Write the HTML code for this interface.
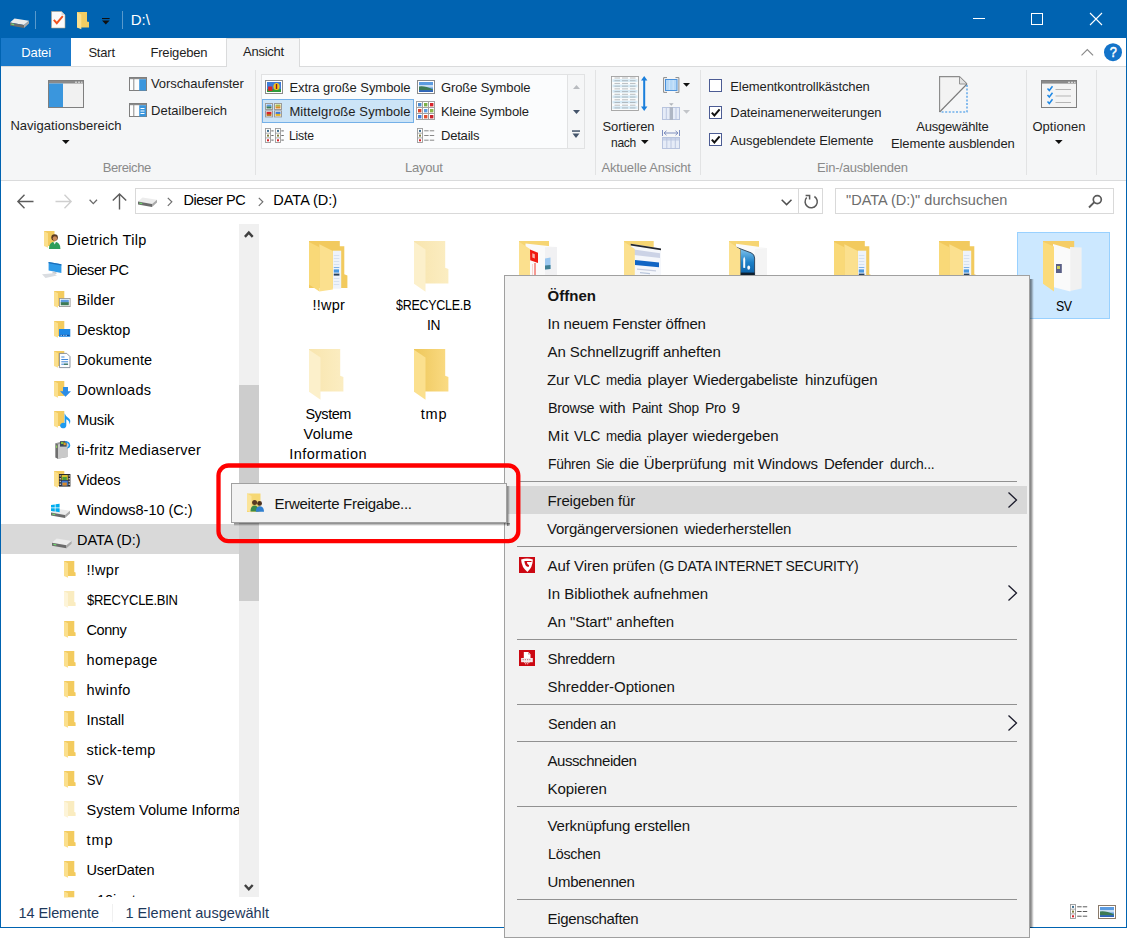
<!DOCTYPE html>
<html><head><meta charset="utf-8"><title>D:\</title>
<style>
html,body{margin:0;padding:0;background:#fff;}
body{width:1127px;height:940px;position:relative;overflow:hidden;font-family:"Liberation Sans",sans-serif;}
div,span.t,svg{position:absolute;}
span.t{white-space:nowrap;line-height:20px;}
svg{overflow:visible;}
</style></head><body>
<div style="left:0px;top:0px;width:1127px;height:928px;background:#0063B1;"></div>
<div style="left:1px;top:38px;width:1125px;height:889px;background:#fff;"></div>
<span class="t" style="left:130.70px;top:10.00px;font-size:15px;color:#fff;">D:\</span>
<div style="left:1px;top:38px;width:70px;height:28px;background:#1979CA;"></div>
<span class="t" style="left:21.30px;top:42.50px;font-size:13px;color:#fff;letter-spacing:-0.139px;">Datei</span>
<span class="t" style="left:88.40px;top:42.50px;font-size:13px;color:#1E1E1E;letter-spacing:-0.207px;">Start</span>
<span class="t" style="left:150.40px;top:42.50px;font-size:13px;color:#1E1E1E;letter-spacing:-0.171px;">Freigeben</span>
<div style="left:1px;top:66px;width:1125px;height:113px;background:#F5F6F7;border-top:1px solid #DADBDC;border-bottom:1px solid #DADBDC;box-sizing:content-box;"></div>
<div style="left:226px;top:38px;width:74px;height:29px;background:#F5F6F7;border:1px solid #DADBDC;border-bottom:none;box-sizing:border-box;"></div>
<span class="t" style="left:243.10px;top:42.30px;font-size:13px;color:#1E1E1E;letter-spacing:-0.273px;">Ansicht</span>
<div style="left:255px;top:70px;width:1px;height:105px;background:#E2E3E4;"></div>
<div style="left:595px;top:70px;width:1px;height:105px;background:#E2E3E4;"></div>
<div style="left:700px;top:70px;width:1px;height:105px;background:#E2E3E4;"></div>
<div style="left:1026px;top:70px;width:1px;height:105px;background:#E2E3E4;"></div>
<div style="left:1096px;top:70px;width:1px;height:105px;background:#E2E3E4;"></div>
<span class="t" style="left:102.75px;top:158.00px;font-size:13px;color:#8A8A8A;letter-spacing:-0.398px;">Bereiche</span>
<span class="t" style="left:405.00px;top:158.00px;font-size:13px;color:#8A8A8A;letter-spacing:-0.213px;">Layout</span>
<span class="t" style="left:601.45px;top:158.00px;font-size:13px;color:#8A8A8A;letter-spacing:-0.152px;">Aktuelle Ansicht</span>
<span class="t" style="left:817.00px;top:158.00px;font-size:13px;color:#8A8A8A;letter-spacing:-0.214px;">Ein-/ausblenden</span>
<span class="t" style="left:10.40px;top:115.90px;font-size:13px;color:#1E1E1E;letter-spacing:0.037px;">Navigationsbereich</span>
<span class="t" style="left:151.00px;top:74.30px;font-size:13px;color:#1E1E1E;letter-spacing:-0.080px;">Vorschaufenster</span>
<span class="t" style="left:151.00px;top:100.50px;font-size:13px;color:#1E1E1E;letter-spacing:0.012px;">Detailbereich</span>
<div style="left:261px;top:74px;width:324px;height:75px;background:#FBFCFD;border:1px solid #E1E2E3;box-sizing:border-box;"></div>
<div style="left:567px;top:75px;width:17px;height:73px;background:#F5F6F7;border-left:1px solid #E1E2E3;box-sizing:border-box;"></div>
<div style="left:262px;top:99px;width:152px;height:24px;background:#CCE4F7;border:1px solid #74B0E8;box-sizing:border-box;"></div>
<span class="t" style="left:289.40px;top:77.50px;font-size:13px;color:#1E1E1E;letter-spacing:-0.052px;">Extra große Symbole</span>
<span class="t" style="left:289.40px;top:101.50px;font-size:13px;color:#1E1E1E;letter-spacing:0.111px;">Mittelgroße Symbole</span>
<span class="t" style="left:289.40px;top:125.50px;font-size:13px;color:#1E1E1E;letter-spacing:-0.206px;transform:scaleX(0.9396);transform-origin:0 0;">Liste</span>
<span class="t" style="left:441.00px;top:77.50px;font-size:13px;color:#1E1E1E;letter-spacing:-0.130px;">Große Symbole</span>
<span class="t" style="left:441.00px;top:101.50px;font-size:13px;color:#1E1E1E;letter-spacing:-0.188px;">Kleine Symbole</span>
<span class="t" style="left:441.00px;top:125.50px;font-size:13px;color:#1E1E1E;letter-spacing:-0.203px;">Details</span>
<span class="t" style="left:602.40px;top:116.50px;font-size:13px;color:#1E1E1E;letter-spacing:-0.072px;">Sortieren</span>
<span class="t" style="left:610.70px;top:133.00px;font-size:13px;color:#1E1E1E;letter-spacing:-0.282px;transform:scaleX(0.9246);transform-origin:0 0;">nach</span>
<span class="t" style="left:730.30px;top:76.50px;font-size:13px;color:#1E1E1E;letter-spacing:-0.097px;">Elementkontrollkästchen</span>
<span class="t" style="left:730.30px;top:103.00px;font-size:13px;color:#1E1E1E;letter-spacing:-0.054px;">Dateinamenerweiterungen</span>
<span class="t" style="left:730.30px;top:130.50px;font-size:13px;color:#1E1E1E;letter-spacing:-0.104px;">Ausgeblendete Elemente</span>
<span class="t" style="left:916.30px;top:116.50px;font-size:13px;color:#1E1E1E;letter-spacing:-0.212px;">Ausgewählte</span>
<span class="t" style="left:891.00px;top:133.50px;font-size:13px;color:#1E1E1E;letter-spacing:-0.110px;">Elemente ausblenden</span>
<span class="t" style="left:1032.40px;top:116.50px;font-size:13px;color:#1E1E1E;letter-spacing:0.046px;">Optionen</span>
<div style="left:135px;top:188px;width:688px;height:26px;background:#fff;border:1px solid #D9D9D9;box-sizing:border-box;"></div>
<div style="left:798px;top:189px;width:1px;height:24px;background:#D9D9D9;"></div>
<div style="left:835px;top:188px;width:279px;height:26px;background:#fff;border:1px solid #D9D9D9;box-sizing:border-box;"></div>
<span class="t" style="left:183.50px;top:190.00px;font-size:14.5px;color:#000;letter-spacing:-0.493px;">Dieser PC</span>
<span class="t" style="left:273.30px;top:190.00px;font-size:14.5px;color:#000;">DATA (D:)</span>
<span class="t" style="left:846.00px;top:190.00px;font-size:14.5px;color:#6D6D6D;letter-spacing:0.007px;">&quot;DATA (D:)&quot; durchsuchen</span>
<div style="left:1px;top:524px;width:238px;height:30px;background:#D9D9D9;"></div>
<div style="left:239px;top:224px;width:20px;height:673px;background:#F0F0F0;"></div>
<div style="left:239px;top:385px;width:20px;height:216px;background:#CDCDCD;"></div>
<div style="left:0;top:0;width:238.6px;height:898px;overflow:hidden;">
<span class="t" style="left:66.80px;top:230.00px;font-size:14.5px;color:#000;letter-spacing:0.311px;">Dietrich Tilp</span>
<span class="t" style="left:66.80px;top:260.00px;font-size:14.5px;color:#000;letter-spacing:-0.481px;">Dieser PC</span>
<span class="t" style="left:77.00px;top:290.00px;font-size:14.5px;color:#000;letter-spacing:0.170px;">Bilder</span>
<span class="t" style="left:77.00px;top:320.00px;font-size:14.5px;color:#000;">Desktop</span>
<span class="t" style="left:77.00px;top:350.00px;font-size:14.5px;color:#000;letter-spacing:0.129px;">Dokumente</span>
<span class="t" style="left:77.00px;top:380.00px;font-size:14.5px;color:#000;letter-spacing:0.287px;">Downloads</span>
<span class="t" style="left:77.00px;top:410.00px;font-size:14.5px;color:#000;letter-spacing:-0.154px;">Musik</span>
<span class="t" style="left:77.00px;top:440.00px;font-size:14.5px;color:#000;letter-spacing:0.244px;">ti-fritz Mediaserver</span>
<span class="t" style="left:77.00px;top:470.00px;font-size:14.5px;color:#000;letter-spacing:-0.136px;">Videos</span>
<span class="t" style="left:77.00px;top:500.00px;font-size:14.5px;color:#000;letter-spacing:-0.033px;">Windows8-10 (C:)</span>
<span class="t" style="left:77.00px;top:530.00px;font-size:14.5px;color:#000;letter-spacing:-0.047px;">DATA (D:)</span>
<span class="t" style="left:86.50px;top:560.00px;font-size:14.5px;color:#000;letter-spacing:0.277px;">!!wpr</span>
<span class="t" style="left:86.50px;top:590.00px;font-size:14.5px;color:#000;letter-spacing:-0.286px;transform:scaleX(0.8955);transform-origin:0 0;">$RECYCLE.BIN</span>
<span class="t" style="left:86.50px;top:620.00px;font-size:14.5px;color:#000;letter-spacing:-0.426px;">Conny</span>
<span class="t" style="left:86.50px;top:650.00px;font-size:14.5px;color:#000;letter-spacing:0.341px;">homepage</span>
<span class="t" style="left:86.50px;top:680.00px;font-size:14.5px;color:#000;letter-spacing:0.399px;">hwinfo</span>
<span class="t" style="left:86.50px;top:710.00px;font-size:14.5px;color:#000;letter-spacing:-0.024px;">Install</span>
<span class="t" style="left:86.50px;top:740.00px;font-size:14.5px;color:#000;letter-spacing:0.317px;">stick-temp</span>
<span class="t" style="left:86.50px;top:770.00px;font-size:14.5px;color:#000;letter-spacing:-0.581px;transform:scaleX(0.8734);transform-origin:0 0;">SV</span>
<span class="t" style="left:86.50px;top:800.00px;font-size:14.5px;color:#000;letter-spacing:0.025px;">System Volume Informa</span>
<span class="t" style="left:86.50px;top:830.00px;font-size:14.5px;color:#000;letter-spacing:0.979px;">tmp</span>
<span class="t" style="left:86.50px;top:860.00px;font-size:14.5px;color:#000;letter-spacing:-0.151px;">UserDaten</span>
</div>
<div style="left:1px;top:880px;width:238px;height:17px;overflow:hidden;"><span class="t" style="left:85.5px;top:10px;font-size:14.5px;">w10inst</span></div>
<span class="t" style="left:18.60px;top:903.00px;font-size:14.5px;color:#1E395B;letter-spacing:-0.102px;">14 Elemente</span>
<span class="t" style="left:125.40px;top:903.00px;font-size:14.5px;color:#1E395B;letter-spacing:0.048px;">1 Element ausgewählt</span>
<div style="left:112px;top:904px;width:1px;height:18px;background:#F0F0F0;"></div>
<span class="t" style="left:312.40px;top:295.00px;font-size:14.5px;color:#000;letter-spacing:0.252px;">!!wpr</span>
<span class="t" style="left:395.90px;top:295.00px;font-size:14.5px;color:#000;letter-spacing:-0.301px;transform:scaleX(0.8612);transform-origin:0 0;">$RECYCLE.B</span>
<span class="t" style="left:426.60px;top:315.00px;font-size:14.5px;color:#000;letter-spacing:-0.435px;transform:scaleX(0.9527);transform-origin:0 0;">IN</span>
<span class="t" style="left:305.40px;top:403.80px;font-size:14.5px;color:#000;letter-spacing:-0.472px;">System</span>
<span class="t" style="left:303.60px;top:423.50px;font-size:14.5px;color:#000;letter-spacing:0.169px;">Volume</span>
<span class="t" style="left:289.20px;top:443.80px;font-size:14.5px;color:#000;letter-spacing:0.483px;">Information</span>
<span class="t" style="left:420.70px;top:403.80px;font-size:14.5px;color:#000;letter-spacing:0.829px;">tmp</span>
<div style="left:1017px;top:232px;width:93px;height:87px;background:#CCE8FF;border:1px solid #99D1FF;box-sizing:border-box;"></div>
<span class="t" style="left:1055.70px;top:295.50px;font-size:14.5px;color:#000;letter-spacing:-0.581px;transform:scaleX(0.8521);transform-origin:0 0;">SV</span>
<svg width="0" height="0" style="left:0;top:0"><defs><linearGradient id="gb" x1="0" y1="0" x2="1" y2="0"><stop offset="0" stop-color="#EEC75A"/><stop offset="1" stop-color="#FADB84"/></linearGradient><linearGradient id="gbp" x1="0" y1="0" x2="1" y2="0"><stop offset="0" stop-color="#F8E5AE"/><stop offset="1" stop-color="#FBEDC2"/></linearGradient><linearGradient id="gth" x1="0" y1="0" x2="1" y2="0"><stop offset="0" stop-color="#5F8FD0"/><stop offset="1" stop-color="#BFD7F3"/></linearGradient></defs></svg>
<svg style="left:308.6px;top:241.3px;" width="39" height="52" viewBox="0 0 39 52"><path d="M0 0H30.8V5.2H35.3V33.2L38.4 34.6V47H0Z" fill="#F2CA5E"/><rect x="23.9" y="9.7" width="8.3" height="38" fill="#EEF3FA"/><g stroke-width="1"><path d="M24.8 14.5h5.5M24.8 17.5h5.5M24.8 20.5h5.5M24.8 23.5h5.5M24.8 37.5h5.5M24.8 40.5h5.5M24.8 43.5h5.5" stroke="#D5E1F0"/><path d="M24.8 26.5h5.5" stroke="#7FB2E8"/></g><rect x="24.8" y="28.4" width="5.2" height="3.2" fill="#4A98E0"/><rect x="24.8" y="32.6" width="5.6" height="2" fill="#28425C"/><path d="M10.4 3.2L23.9 10V48.6L10.4 50.6Z" fill="#FBE08E"/><path d="M0 0.9L10.4 6.3V50.6L0 43.4Z" fill="#F9D978"/></svg>
<svg style="left:413.7px;top:241.3px;" width="39" height="52" viewBox="0 0 39 52"><path d="M0 0H31.2V26.7L34.4 28V42.6H0Z" fill="url(#gbp)"/><path d="M0 0.7L11.5 8.4V50.7L0 42.7Z" fill="#FCF0CB"/></svg>
<svg style="left:518.6px;top:241.3px;" width="40" height="52" viewBox="0 0 40 52"><path d="M0 0H30V47H0Z" fill="#F6D573"/><path d="M6.5 2.5L38 6V50H27V47L6.5 40Z" fill="#FAFAFA"/><path d="M26 6.3L38 6V50H26Z" fill="#F1F1F3"/><path d="M11 8.6L19 11.8V22L11.2 19.2Z" fill="#F01A10"/><path d="M13.3 12.2L15.8 13.2V17.6L13.3 16.6Z" fill="#F7B8B0"/><path d="M26 17.5L31.5 16.5V28L26 28.6Z" fill="#9CC8F0"/><path d="M26 24.5L31.5 24V28L26 28.6Z" fill="#3F7F94"/><path d="M16 22V36" stroke="#F0392B" stroke-width="1"/><path d="M13.5 23V36" stroke="#F6C8C4" stroke-width="0.8"/><path d="M0 0.7L11 8V50L0 42.7Z" fill="#FBE08E"/></svg>
<svg style="left:624.3px;top:241.3px;" width="40" height="52" viewBox="0 0 40 52"><path d="M0 0H29.7V47H0Z" fill="#F6D573"/><path d="M6.7 2.7L37 7.5V50L6.7 44Z" fill="#F5F7FB"/><path d="M6.7 2.7L37 7.5V9.3L6.7 4.5Z" fill="#23262E"/><path d="M10 8.5L36 12.2V17L10 14Z" fill="#CCD3E6"/><path d="M11 19L35 21.6V26.2L11 24Z" fill="#1165C4"/><path d="M13 27.5L32 29.3V30.6L13 28.8Z" fill="#C9CFE0"/><path d="M16 31L26 32V33.2L16 32.2Z" fill="#B9C6DC"/><path d="M0 0.7L10.8 8V50L0 42.7Z" fill="#FBE08E"/></svg>
<svg style="left:728.8px;top:241.3px;" width="40" height="52" viewBox="0 0 40 52"><defs><linearGradient id="g5" x1="0" y1="0" x2="0" y2="1"><stop offset="0" stop-color="#8ACBF2"/><stop offset="0.55" stop-color="#1C7FC6"/><stop offset="1" stop-color="#0B5FA5"/></linearGradient></defs><path d="M0 0H30V47H0Z" fill="#F6D573"/><path d="M7 2.7L38 7V50L7 44Z" fill="#FAFAFA"/><path d="M26 8L38 7V50H26Z" fill="#F4F4F4"/><path d="M7.4 6.3L22 11.8Q25.6 13.2 25.6 17V34H11.4V8.6Z" fill="url(#g5)" stroke="#2A3D52" stroke-width="0.9"/><path d="M14.2 26.8V18L15.2 15.6L16.2 18V27Z" fill="#F4F9FD"/><ellipse cx="19.7" cy="26.6" rx="1.4" ry="2.2" fill="#F4F9FD"/><rect x="11.4" y="31.6" width="14.2" height="3" fill="#10202E"/><path d="M0 0.7L11.4 8.4V50L0 42.7Z" fill="#FBE08E"/></svg>
<svg style="left:833.8px;top:241.3px;" width="39" height="52" viewBox="0 0 39 52"><path d="M0 0H30.8V5.2H35.3V33.2L38.4 34.6V47H0Z" fill="#F2CA5E"/><rect x="23.9" y="9.7" width="8.3" height="38" fill="#EEF3FA"/><g stroke-width="1"><path d="M24.8 14.5h5.5M24.8 17.5h5.5M24.8 20.5h5.5M24.8 23.5h5.5M24.8 37.5h5.5M24.8 40.5h5.5M24.8 43.5h5.5" stroke="#D5E1F0"/><path d="M24.8 26.5h5.5" stroke="#7FB2E8"/></g><rect x="24.8" y="28.4" width="5.2" height="3.2" fill="#4A98E0"/><rect x="24.8" y="32.6" width="5.6" height="2" fill="#28425C"/><path d="M10.4 3.2L23.9 10V48.6L10.4 50.6Z" fill="#FBE08E"/><path d="M0 0.9L10.4 6.3V50.6L0 43.4Z" fill="#F9D978"/></svg>
<svg style="left:938.7px;top:241.3px;" width="39" height="52" viewBox="0 0 39 52"><path d="M0 0H30.8V5.2H35.3V33.2L38.4 34.6V47H0Z" fill="#F2CA5E"/><rect x="23.9" y="9.7" width="8.3" height="38" fill="#EEF3FA"/><g stroke-width="1"><path d="M24.8 14.5h5.5M24.8 17.5h5.5M24.8 20.5h5.5M24.8 23.5h5.5M24.8 37.5h5.5M24.8 40.5h5.5M24.8 43.5h5.5" stroke="#D5E1F0"/><path d="M24.8 26.5h5.5" stroke="#7FB2E8"/></g><rect x="24.8" y="28.4" width="5.2" height="3.2" fill="#4A98E0"/><rect x="24.8" y="32.6" width="5.6" height="2" fill="#28425C"/><path d="M10.4 3.2L23.9 10V48.6L10.4 50.6Z" fill="#FBE08E"/><path d="M0 0.9L10.4 6.3V50.6L0 43.4Z" fill="#F9D978"/></svg>
<svg style="left:308.7px;top:349.3px;" width="39" height="52" viewBox="0 0 39 52"><path d="M0 0H31.2V26.7L34.4 28V42.6H0Z" fill="url(#gbp)"/><path d="M0 0.7L11.5 8.4V50.7L0 42.7Z" fill="#FCF0CB"/></svg>
<svg style="left:413.7px;top:349.3px;" width="39" height="52" viewBox="0 0 39 52"><path d="M0 0H31.2V26.7L34.4 28V42.6H0Z" fill="url(#gb)"/><path d="M0 0.7L11.5 8.4V50.7L0 42.7Z" fill="#FBE08E"/></svg>
<svg style="left:1043.2px;top:241px;" width="40" height="52" viewBox="0 0 40 52"><path d="M0 0H31.2V8H0Z" fill="#F5CD66"/><path d="M27 6L38.6 6.5V47.5L27 50Z" fill="#F1F1F1"/><path d="M10 3L27.4 8V50.5L10 46Z" fill="#FAFAFA"/><rect x="13" y="23" width="5.8" height="9" fill="#5A5F86"/><rect x="14" y="25" width="3" height="3" fill="#C9CC5A"/><path d="M0 0.7L11 5.5V50.5L0 42.7Z" fill="#FBDB7A"/></svg>
<svg style="left:64px;top:560.7px;" width="12" height="17" viewBox="0 0 12 17"><path d="M0 0H10.3V11L11.6 11.4V15H0Z" fill="#F3CB5E"/><path d="M0 0.2L4 2.3V16.8L0 15Z" fill="#FBDF8C"/></svg>
<svg style="left:64px;top:590.7px;" width="12" height="17" viewBox="0 0 12 17"><path d="M0 0H10.3V11L11.6 11.4V15H0Z" fill="#FAECC0"/><path d="M0 0.2L4 2.3V16.8L0 15Z" fill="#FDF4D8"/></svg>
<svg style="left:64px;top:620.7px;" width="12" height="17" viewBox="0 0 12 17"><path d="M0 0H10.3V11L11.6 11.4V15H0Z" fill="#F3CB5E"/><path d="M0 0.2L4 2.3V16.8L0 15Z" fill="#FBDF8C"/></svg>
<svg style="left:64px;top:650.7px;" width="12" height="17" viewBox="0 0 12 17"><path d="M0 0H10.3V11L11.6 11.4V15H0Z" fill="#F3CB5E"/><path d="M0 0.2L4 2.3V16.8L0 15Z" fill="#FBDF8C"/></svg>
<svg style="left:64px;top:680.7px;" width="12" height="17" viewBox="0 0 12 17"><path d="M0 0H10.3V11L11.6 11.4V15H0Z" fill="#F3CB5E"/><path d="M0 0.2L4 2.3V16.8L0 15Z" fill="#FBDF8C"/></svg>
<svg style="left:64px;top:710.7px;" width="12" height="17" viewBox="0 0 12 17"><path d="M0 0H10.3V11L11.6 11.4V15H0Z" fill="#F3CB5E"/><path d="M0 0.2L4 2.3V16.8L0 15Z" fill="#FBDF8C"/></svg>
<svg style="left:64px;top:740.7px;" width="12" height="17" viewBox="0 0 12 17"><path d="M0 0H10.3V11L11.6 11.4V15H0Z" fill="#F3CB5E"/><path d="M0 0.2L4 2.3V16.8L0 15Z" fill="#FBDF8C"/></svg>
<svg style="left:64px;top:770.7px;" width="12" height="17" viewBox="0 0 12 17"><path d="M0 0H10.3V11L11.6 11.4V15H0Z" fill="#F3CB5E"/><path d="M0 0.2L4 2.3V16.8L0 15Z" fill="#FBDF8C"/></svg>
<svg style="left:64px;top:800.7px;" width="12" height="17" viewBox="0 0 12 17"><path d="M0 0H10.3V11L11.6 11.4V15H0Z" fill="#FAECC0"/><path d="M0 0.2L4 2.3V16.8L0 15Z" fill="#FDF4D8"/></svg>
<svg style="left:64px;top:830.7px;" width="12" height="17" viewBox="0 0 12 17"><path d="M0 0H10.3V11L11.6 11.4V15H0Z" fill="#F3CB5E"/><path d="M0 0.2L4 2.3V16.8L0 15Z" fill="#FBDF8C"/></svg>
<svg style="left:64px;top:860.7px;" width="12" height="17" viewBox="0 0 12 17"><path d="M0 0H10.3V11L11.6 11.4V15H0Z" fill="#F3CB5E"/><path d="M0 0.2L4 2.3V16.8L0 15Z" fill="#FBDF8C"/></svg>
<svg style="left:64px;top:890.7px;" width="12" height="6.3" viewBox="0 0 12 6.3"><path d="M0 0H10.3V6.3H0Z" fill="#F3CB5E"/><path d="M0 0.2L4 2.3V6.3H0Z" fill="#FBDF8C"/></svg>
<svg style="left:9.7px;top:18.3px;" width="19.0" height="10.0" viewBox="0 0 19 10"><path d="M0 4.5L4.5 0.6L19 2.8L14 7Z" fill="#ECECEC"/><path d="M0 4.5L14 7V10L0 7.5Z" fill="#6B6B6B"/><path d="M14 7L19 2.8V5.6L14 10Z" fill="#A9A9A9"/><path d="M1.3 5.6L4.2 6.1V7.2L1.3 6.7Z" fill="#6FD66F"/></svg>
<div style="left:35px;top:11px;width:1px;height:18px;background:rgba(255,255,255,.35);"></div>
<div style="left:122px;top:11px;width:1px;height:18px;background:rgba(255,255,255,.35);"></div>
<svg style="left:51px;top:11.3px;" width="15" height="18" viewBox="0 0 15 18"><path d="M0.5 0.5H10.5L14 4V17H0.5Z" fill="#FBFBFB" stroke="#B9A58C" stroke-width="0.6"/><path d="M10.5 0.5V4H14Z" fill="#D9D9D9"/><path d="M2.8 8.8L5.8 12.2L11.8 5.2" fill="none" stroke="#F0501E" stroke-width="1.9"/></svg>
<svg style="left:76.7px;top:12px;" width="13" height="18" viewBox="0 0 13 18"><path d="M0 0H10V9.5L12 10V15.5H0Z" fill="#F2CC62"/><path d="M0 0.3L4.3 2.6V17.3L0 15.5Z" fill="#FBE08E"/></svg>
<svg style="left:102px;top:18px;" width="8" height="7" viewBox="0 0 8 7"><rect x="0" y="0" width="7.6" height="1.1" fill="#101010"/><path d="M0 2.4H7.6L3.8 6.6Z" fill="#101010"/></svg>
<svg style="left:973px;top:18px;" width="12" height="1" viewBox="0 0 12 1"><rect width="12" height="1" fill="#fff"/></svg>
<svg style="left:1031px;top:13px;" width="12" height="12" viewBox="0 0 12 12"><rect x="0.5" y="0.5" width="11" height="11" fill="none" stroke="#fff" stroke-width="1"/></svg>
<svg style="left:1090px;top:13px;" width="12" height="12" viewBox="0 0 12 12"><path d="M0 0L12 12M12 0L0 12" stroke="#fff" stroke-width="1.1" fill="none"/></svg>
<svg style="left:1081px;top:49px;" width="13" height="7" viewBox="0 0 13 7"><path d="M0.5 6.3L6.3 0.6L12.1 6.3" fill="none" stroke="#8A8A8A" stroke-width="1.15"/></svg>
<svg style="left:1104px;top:43px;" width="18" height="18" viewBox="0 0 18 18"><circle cx="9" cy="9.2" r="9" fill="#1373C9"/></svg>
<span class="t" style="left:1108.84px;top:42.10px;font-size:15px;color:#fff;-webkit-text-stroke:0.5px #fff;transform:scaleX(0.85);transform-origin:50% 50%;">?</span>
<svg style="left:17px;top:194px;" width="17" height="15" viewBox="0 0 17 15"><path d="M7.5 0.8L0.9 7.5L7.5 14.2M1 7.5H16.5" fill="none" stroke="#5C5C5C" stroke-width="1.4"/></svg>
<svg style="left:55px;top:194px;" width="17" height="15" viewBox="0 0 17 15"><path d="M9.5 0.8L16.1 7.5L9.5 14.2M16 7.5H0.5" fill="none" stroke="#CFCFCF" stroke-width="1.4"/></svg>
<svg style="left:89px;top:199px;" width="9" height="6" viewBox="0 0 9 6"><path d="M0.6 0.8L4.3 4.6L8 0.8" fill="none" stroke="#6A6A6A" stroke-width="1.3"/></svg>
<svg style="left:112px;top:193px;" width="15" height="17" viewBox="0 0 15 17"><path d="M0.8 7.5L7.5 0.9L14.2 7.5M7.5 1V16.5" fill="none" stroke="#5C5C5C" stroke-width="1.4"/></svg>
<svg style="left:138.4px;top:196.5px;" width="19.0" height="10.0" viewBox="0 0 19 10"><path d="M0 4.5L4.5 0.6L19 2.8L14 7Z" fill="#ECECEC"/><path d="M0 4.5L14 7V10L0 7.5Z" fill="#6B6B6B"/><path d="M14 7L19 2.8V5.6L14 10Z" fill="#A9A9A9"/><path d="M1.3 5.6L4.2 6.1V7.2L1.3 6.7Z" fill="#6FD66F"/></svg>
<svg style="left:167px;top:196.5px;" width="6" height="10" viewBox="0 0 6 10"><path d="M0.8 0.8L4.8 4.8L0.8 8.8" fill="none" stroke="#6E6E6E" stroke-width="1.2"/></svg>
<svg style="left:258px;top:196.5px;" width="6" height="10" viewBox="0 0 6 10"><path d="M0.8 0.8L4.8 4.8L0.8 8.8" fill="none" stroke="#6E6E6E" stroke-width="1.2"/></svg>
<svg style="left:781.2px;top:199.3px;" width="11.2" height="7" viewBox="0 0 11.2 7"><path d="M0.7 0.8L5.6 5.6L10.5 0.8" fill="none" stroke="#505050" stroke-width="1.5"/></svg>
<svg style="left:803px;top:194px;" width="16" height="16" viewBox="0 0 16 16"><path d="M11.4 2.5A6.1 6.1 0 1 1 3.7 3.55" fill="none" stroke="#5A5A5A" stroke-width="1.5"/><path d="M2.6 1.5H6.6V5.5" fill="none" stroke="#5A5A5A" stroke-width="1.5"/></svg>
<svg style="left:1088px;top:194px;" width="15" height="15" viewBox="0 0 15 15"><circle cx="9.3" cy="5.6" r="4" fill="none" stroke="#5A5A5A" stroke-width="1.7"/><path d="M6.3 8.2L1 13.5" stroke="#5A5A5A" stroke-width="1.9"/></svg>
<svg style="left:243.7px;top:230px;" width="9.6" height="9" viewBox="0 0 9.6 9"><path d="M0.9 6.9L4.8 2.6L8.7 6.9" fill="none" stroke="#404040" stroke-width="2.4"/></svg>
<svg style="left:243.7px;top:883px;" width="9.6" height="9" viewBox="0 0 9.6 9"><path d="M0.9 2L4.8 6.3L8.7 2" fill="none" stroke="#404040" stroke-width="2.4"/></svg>
<svg style="left:48px;top:80px;" width="36" height="28" viewBox="0 0 36 28"><rect x="0.5" y="0.5" width="35" height="27" fill="#F1F1F1" stroke="#7F7F7F"/><rect x="1" y="1" width="34" height="2.5" fill="#8A8A8A"/><rect x="1" y="3.5" width="14" height="23.5" fill="#3A96DD"/><path d="M27 2.2h2M30 2.2h2M33 2.2h1.5" stroke="#E8E8E8" stroke-width="1"/></svg>
<svg style="left:44.5px;top:139.5px;left:61.5px;" width="8" height="4" viewBox="0 0 8 4"><path d="M0 0H7.6L3.8 4Z" fill="#101010"/></svg>
<svg style="left:129px;top:77px;" width="18" height="14" viewBox="0 0 18 14"><rect x="0.5" y="0.5" width="17" height="13" fill="#FDFDFD" stroke="#7F7F7F"/><rect x="1" y="1" width="16" height="1.2" fill="#8A8A8A"/><rect x="4.3" y="2" width="1" height="11.5" fill="#8A8A8A"/><rect x="10.2" y="2.2" width="6.8" height="11.3" fill="#3A96DD"/></svg>
<svg style="left:129px;top:103px;" width="18" height="14" viewBox="0 0 18 14"><rect x="0.5" y="0.5" width="17" height="13" fill="#FDFDFD" stroke="#7F7F7F"/><rect x="1" y="1" width="16" height="1.2" fill="#8A8A8A"/><rect x="4.3" y="2" width="1" height="11.5" fill="#8A8A8A"/><rect x="10.2" y="2.2" width="6.8" height="11.3" fill="#3A96DD"/><path d="M11.5 5.5h4M11.5 8h4M11.5 10.5h4" stroke="#fff" stroke-width="1"/></svg>
<svg style="left:265px;top:80px;" width="18" height="14" viewBox="0 0 18 14"><rect x="0.5" y="0.5" width="17" height="13" fill="#fff" stroke="#8A8A8A"/><rect x="2" y="2" width="14" height="10" fill="#3E7BD8"/><rect x="2" y="9.2" width="14" height="2.8000000000000003" fill="#2F9A3A"/><rect x="3.12" y="6.5" width="4.2" height="4.5" fill="#D8232A"/><ellipse cx="11.520000000000001" cy="6.5" rx="3.08" ry="3.5999999999999996" fill="#F5C518"/><rect x="10.82" y="4.0" width="1.4000000000000001" height="5.0" fill="#8B1A1A"/></svg>
<svg style="left:417px;top:80px;" width="18" height="14" viewBox="0 0 18 14"><rect x="0.5" y="0.5" width="17" height="13" fill="#fff" stroke="#8A8A8A"/><rect x="2" y="2" width="14" height="10" fill="#5B9BE0"/><rect x="2" y="5.0" width="14" height="2.5" fill="#C7DDF2"/><path d="M2 6.5Q7.6000000000000005 5.5 16 9.5V10.5H2Z" fill="#3D7A55"/><rect x="2" y="10.2" width="14" height="1.7999999999999998" fill="#2E63B8"/></svg>
<svg style="left:265px;top:103px;" width="18" height="15" viewBox="0 0 18 15"><rect x="0.5" y="0.5" width="7" height="6" fill="#fff" stroke="#9A9A9A" stroke-width="1"/><rect x="1.5" y="1.5" width="5" height="2.20" fill="#5B9BE0"/><rect x="1.5" y="3.50" width="5" height="2.00" fill="#3D7A55"/><rect x="9.5" y="0.5" width="7" height="6" fill="#fff" stroke="#9A9A9A" stroke-width="1"/><rect x="10.5" y="1.5" width="5" height="2.20" fill="#A8B84A"/><rect x="10.5" y="3.50" width="5" height="2.00" fill="#D88A2A"/><rect x="0.5" y="7.9" width="7" height="6" fill="#fff" stroke="#9A9A9A" stroke-width="1"/><rect x="1.5" y="8.9" width="5" height="2.20" fill="#D8232A"/><rect x="1.5" y="10.90" width="5" height="2.00" fill="#B86A1A"/><rect x="9.5" y="7.9" width="7" height="6" fill="#fff" stroke="#9A9A9A" stroke-width="1"/><rect x="10.5" y="8.9" width="5" height="2.20" fill="#3E7BD8"/><rect x="10.5" y="10.90" width="5" height="2.00" fill="#E0B020"/></svg>
<svg style="left:416px;top:101px;" width="19" height="19" viewBox="0 0 19 19"><rect x="0.5" y="0.5" width="18" height="18" fill="#fff" stroke="#A2A2A2" stroke-width="1"/><path d="M6.5 1V18M12.5 1V18M1 6.5H18M1 12.5H18" stroke="#A2A2A2" stroke-width="1"/><rect x="2" y="2" width="3.4" height="3.4" fill="#4A8ACF"/><rect x="8" y="2" width="3.4" height="3.4" fill="#7AB04A"/><rect x="14" y="2" width="3.4" height="3.4" fill="#D8232A"/><rect x="2" y="8" width="3.4" height="3.4" fill="#D8432A"/><rect x="8" y="8" width="3.4" height="3.4" fill="#5B9BE0"/><rect x="14" y="8" width="3.4" height="3.4" fill="#8AB84A"/><rect x="2" y="14" width="3.4" height="3.4" fill="#3E7BD8"/><rect x="8" y="14" width="3.4" height="3.4" fill="#E05030"/><rect x="14" y="14" width="3.4" height="3.4" fill="#C8232A"/></svg>
<svg style="left:264.5px;top:128px;" width="19" height="15" viewBox="0 0 19 15"><rect x="0.5" y="0.5" width="5" height="14" fill="#fff" stroke="#9A9A9A" stroke-width="0.9"/><path d="M0.5 5.2h5M0.5 9.9h5" stroke="#9A9A9A" stroke-width="0.8"/><rect x="2" y="1.9" width="2" height="2" fill="#3F6F8F"/><rect x="2" y="6.6" width="2" height="2" fill="#7F7F3F"/><rect x="2" y="11.3" width="2" height="2" fill="#D8232A"/><rect x="10.5" y="0.5" width="5" height="14" fill="#fff" stroke="#9A9A9A" stroke-width="0.9"/><path d="M10.5 5.2h5M10.5 9.9h5" stroke="#9A9A9A" stroke-width="0.8"/><rect x="12" y="1.9" width="2" height="2" fill="#3F6F8F"/><rect x="12" y="6.6" width="2" height="2" fill="#7F7F3F"/><rect x="12" y="11.3" width="2" height="2" fill="#D8232A"/><path d="M6.3 2.9h2.3M6.3 7.5h2.3M6.3 12.1h2.3M16.3 2.9h2.5M16.3 7.5h2.5M16.3 12.1h2.5" stroke="#6A6A6A" stroke-width="1"/></svg>
<svg style="left:417.2px;top:127.8px;" width="18" height="15" viewBox="0 0 18 15"><rect x="0.5" y="0.5" width="5" height="14" fill="#fff" stroke="#9A9A9A" stroke-width="0.9"/><path d="M0.5 5.2h5M0.5 9.9h5" stroke="#9A9A9A" stroke-width="0.8"/><rect x="2" y="1.9" width="2" height="2" fill="#3F6F8F"/><rect x="2" y="6.6" width="2" height="2" fill="#7F7F3F"/><rect x="2" y="11.3" width="2" height="2" fill="#D8232A"/><path d="M7.2 2.8h4.4M12.8 2.8h4.4M7.2 7.5h4.4M12.8 7.5h4.4M7.2 12.2h4.4M12.8 12.2h4.4" stroke="#7A7A7A" stroke-width="0.9"/></svg>
<svg style="left:572.5px;top:85px;" width="7" height="4" viewBox="0 0 7 4"><path d="M0 4H7L3.5 0Z" fill="#B8BBBF"/></svg>
<svg style="left:572.5px;top:109.5px;" width="7" height="4" viewBox="0 0 7 4"><path d="M0 0H7L3.5 4Z" fill="#44546A"/></svg>
<svg style="left:572px;top:130px;" width="8" height="9" viewBox="0 0 8 9"><rect x="0" y="0.3" width="8" height="1.5" fill="#44546A"/><path d="M0.5 3.6H7.5L4 8Z" fill="#44546A"/></svg>
<svg style="left:611px;top:76px;" width="28" height="35" viewBox="0 0 28 35"><rect x="0.5" y="0.5" width="27" height="34" fill="#FCFCFC" stroke="#A0A0A0" stroke-width="0.9"/><rect x="1.5" y="3.2" width="25" height="2.7" fill="#D6EAF6"/><rect x="1.5" y="8.6" width="25" height="2.7" fill="#D6EAF6"/><rect x="1.5" y="14.0" width="25" height="2.7" fill="#D6EAF6"/><rect x="1.5" y="19.4" width="25" height="2.7" fill="#D6EAF6"/><rect x="1.5" y="24.8" width="25" height="2.7" fill="#D6EAF6"/><rect x="1.5" y="30.2" width="25" height="2.7" fill="#D6EAF6"/><path d="M3.5 2.00h5.5M11 2.00h6M19 2.00h5.5" stroke="#9EA3A8" stroke-width="0.7"/><path d="M3.5 4.72h5.5M11 4.72h6M19 4.72h5.5" stroke="#9EA3A8" stroke-width="0.7"/><path d="M3.5 7.44h5.5M11 7.44h6M19 7.44h5.5" stroke="#9EA3A8" stroke-width="0.7"/><path d="M3.5 10.16h5.5M11 10.16h6M19 10.16h5.5" stroke="#9EA3A8" stroke-width="0.7"/><path d="M3.5 12.88h5.5M11 12.88h6M19 12.88h5.5" stroke="#9EA3A8" stroke-width="0.7"/><path d="M3.5 15.60h5.5M11 15.60h6M19 15.60h5.5" stroke="#9EA3A8" stroke-width="0.7"/><path d="M3.5 18.32h5.5M11 18.32h6M19 18.32h5.5" stroke="#9EA3A8" stroke-width="0.7"/><path d="M3.5 21.04h5.5M11 21.04h6M19 21.04h5.5" stroke="#9EA3A8" stroke-width="0.7"/><path d="M3.5 23.76h5.5M11 23.76h6M19 23.76h5.5" stroke="#9EA3A8" stroke-width="0.7"/><path d="M3.5 26.48h5.5M11 26.48h6M19 26.48h5.5" stroke="#9EA3A8" stroke-width="0.7"/><path d="M3.5 29.20h5.5M11 29.20h6M19 29.20h5.5" stroke="#9EA3A8" stroke-width="0.7"/><path d="M3.5 31.92h5.5M11 31.92h6M19 31.92h5.5" stroke="#9EA3A8" stroke-width="0.7"/></svg>
<svg style="left:640.5px;top:76px;" width="6.4" height="35" viewBox="0 0 6.4 35"><path d="M3.2 0L6.4 4.6H4.2V30.4H6.4L3.2 35L0 30.4H2.2V4.6H0Z" fill="#1B7FDB"/></svg>
<svg style="left:640.5px;top:140px;" width="8" height="4" viewBox="0 0 8 4"><path d="M0 0H7.6L3.8 4Z" fill="#101010"/></svg>
<svg style="left:663px;top:77px;" width="17" height="16" viewBox="0 0 17 16"><rect x="2.5" y="2.5" width="11.5" height="11" fill="#B5D8F7" stroke="#4A90D9" stroke-width="1"/><path d="M4 0.6H0.6V15.4H4M12.5 0.6H15.9V15.4H12.5" fill="none" stroke="#8A8A8A" stroke-width="1"/><path d="M6.3 3v10M10.2 3v10" stroke="#D6EAFB" stroke-width="0.8"/></svg>
<svg style="left:682.5px;top:82.5px;" width="7" height="4" viewBox="0 0 7 4"><path d="M0 0H7L3.5 3.8Z" fill="#101010"/></svg>
<svg style="left:662px;top:103px;" width="18" height="17" viewBox="0 0 18 17"><path d="M7 0.3H11.6L9.3 2.8Z" fill="#B0B4BA"/><rect x="0.5" y="4.5" width="17" height="12" fill="#E6ECF7" stroke="#B8C4DE" stroke-width="1"/><rect x="7.6" y="4" width="3.4" height="13" fill="#AEB6C4"/><path d="M4.3 5v11M14 5v11" stroke="#B8C4DE" stroke-width="0.9"/></svg>
<svg style="left:682.5px;top:110px;" width="7" height="4" viewBox="0 0 7 4"><path d="M0 0H7L3.5 3.8Z" fill="#C2C5C9"/></svg>
<svg style="left:662px;top:129.5px;" width="18" height="19" viewBox="0 0 18 19"><path d="M0.5 0V6M17.5 0V6" stroke="#7F8FBF" stroke-width="1"/><path d="M2 3H16M4.5 0.8L2 3L4.5 5.2M13.5 0.8L16 3L13.5 5.2" fill="none" stroke="#7F8FBF" stroke-width="1"/><rect x="0.5" y="7.5" width="17" height="11" fill="#E6ECF7" stroke="#B8C4DE" stroke-width="1"/><rect x="1" y="8" width="16" height="2.6" fill="#C8D2E8"/><path d="M4.8 8v10.5M9 8v10.5M13.3 8v10.5" stroke="#B8C4DE" stroke-width="0.9"/></svg>
<svg style="left:709px;top:79px;" width="13" height="13" viewBox="0 0 13 13"><rect x="0.5" y="0.5" width="12" height="12" fill="#fff" stroke="#4C5C94" stroke-width="1"/></svg>
<svg style="left:709px;top:106px;" width="13" height="13" viewBox="0 0 13 13"><rect x="0.5" y="0.5" width="12" height="12" fill="#fff" stroke="#4C5C94" stroke-width="1"/><path d="M2.8 6.6L5.4 9.4L10.6 3.4" fill="none" stroke="#111" stroke-width="2"/></svg>
<svg style="left:709px;top:133px;" width="13" height="13" viewBox="0 0 13 13"><rect x="0.5" y="0.5" width="12" height="12" fill="#fff" stroke="#4C5C94" stroke-width="1"/><path d="M2.8 6.6L5.4 9.4L10.6 3.4" fill="none" stroke="#111" stroke-width="2"/></svg>
<svg style="left:939px;top:75.5px;" width="29" height="37" viewBox="0 0 29 37"><path d="M0.6 36V0.6H20.5L28 8" fill="none" stroke="#8C8C8C" stroke-width="1.1"/><path d="M0.6 0.6H20.5L28 8L0.6 36Z" fill="#F3F3F3"/><path d="M20.5 0.6V8H28Z" fill="#E2E2E2" stroke="#8C8C8C" stroke-width="0.9"/><path d="M0.6 36V0.6H20.5" fill="none" stroke="#8C8C8C" stroke-width="1.1"/><path d="M28 8L0.6 36" stroke="#7A7A7A" stroke-width="1.1"/><path d="M28 9V36H1" fill="none" stroke="#2B8CE6" stroke-width="1.1" stroke-dasharray="2 1.6"/></svg>
<svg style="left:1041px;top:80px;" width="36" height="28" viewBox="0 0 36 28"><rect x="0.5" y="0.5" width="35" height="27" fill="#F4F4F4" stroke="#7F7F7F"/><rect x="1" y="1" width="34" height="2.6" fill="#8A8A8A"/><path d="M27 2.3h2M30 2.3h2M33 2.3h1.5" stroke="#E8E8E8" stroke-width="1"/><g fill="none" stroke="#1E88E5" stroke-width="1.5"><path d="M6.5 8.5L8.3 10.5L11.5 6.3"/><path d="M6.5 15L8.3 17L11.5 12.8"/><path d="M6.5 21.5L8.3 23.5L11.5 19.3"/></g><path d="M14.5 9.5H30M14.5 16H30M14.5 22.5H30" stroke="#B5B5B5" stroke-width="1"/></svg>
<svg style="left:1055px;top:139.5px;" width="8" height="4" viewBox="0 0 8 4"><path d="M0 0H7.6L3.8 4Z" fill="#101010"/></svg>
<svg style="left:1070px;top:904px;" width="18" height="16" viewBox="0 0 18 16"><rect x="0.5" y="0.5" width="5" height="14" fill="#fff" stroke="#9A9A9A" stroke-width="0.9"/><path d="M0.5 5.2h5M0.5 9.9h5" stroke="#9A9A9A" stroke-width="0.8"/><rect x="2" y="1.9" width="2" height="2" fill="#3F6F8F"/><rect x="2" y="6.6" width="2" height="2" fill="#7F7F3F"/><rect x="2" y="11.3" width="2" height="2" fill="#D8232A"/><path d="M7.2 2.8h4.4M12.8 2.8h4.4M7.2 7.5h4.4M12.8 7.5h4.4M7.2 12.2h4.4M12.8 12.2h4.4" stroke="#5A5A5A" stroke-width="1"/></svg>
<svg style="left:1098px;top:905px;" width="18" height="14" viewBox="0 0 18 14"><rect x="0.5" y="0.5" width="17" height="13" fill="#fff" stroke="#8A7A6A"/><rect x="2" y="2" width="14" height="10" fill="#5B9BE0"/><rect x="2" y="5.0" width="14" height="2.5" fill="#C7DDF2"/><path d="M2 6.5Q7.6000000000000005 5.5 16 9.5V10.5H2Z" fill="#3D7A55"/><rect x="2" y="10.2" width="14" height="1.7999999999999998" fill="#2E63B8"/></svg>
<svg style="left:43.9px;top:230.7px;" width="17" height="18" viewBox="0 0 17 18"><path d="M0 0H10.5V15H0Z" fill="#F3CB5E"/><path d="M0 0.2L4 2.3V16.8L0 15Z" fill="#FBDF8C"/><path d="M5 17.9Q5 11 10.6 10.8Q16.4 11 16.4 17.9Z" fill="#2E9E5A"/><circle cx="10.6" cy="6.6" r="3.3" fill="#5A3A22"/><ellipse cx="10.9" cy="7.6" rx="2.2" ry="2.4" fill="#C98A5A"/><path d="M9.3 11L10.7 13.5L12 11Z" fill="#F2F2F2"/></svg>
<svg style="left:41.5px;top:262px;" width="20" height="16.5" viewBox="0 0 20 16.5"><path d="M6.6 0L19.4 2.2V11L6.6 8.4Z" fill="#2F9BE8"/><path d="M6.6 0L19.4 2.2V3.4L6.6 1.2Z" fill="#1B6DB8"/><path d="M11 9.5L14.5 10.2V12L10 11.6Z" fill="#C9CDD2"/><path d="M0 12.2L11.5 11.3L15 13.5L3.5 16Z" fill="#DADDE1"/></svg>
<svg style="left:53.9px;top:290.7px;" width="12" height="17" viewBox="0 0 12 17"><path d="M0 0H10.3V15H0Z" fill="#F3CB5E"/><path d="M0 0.2L4 2.3V16.8L0 15Z" fill="#FBDF8C"/></svg>
<svg style="left:59px;top:298px;" width="11.5" height="9" viewBox="0 0 11.5 9"><rect x="0.4" y="0.4" width="10.7" height="8.2" fill="#fff" stroke="#8E8E8E" stroke-width="0.8"/><rect x="1.7" y="1.7" width="8.1" height="3" fill="#5B9BE0"/><rect x="1.7" y="4.2" width="8.1" height="3.1" fill="#3D7A55"/></svg>
<svg style="left:53.9px;top:320.7px;" width="12" height="17" viewBox="0 0 12 17"><path d="M0 0H10.3V15H0Z" fill="#F3CB5E"/><path d="M0 0.2L4 2.3V16.8L0 15Z" fill="#FBDF8C"/></svg>
<svg style="left:59px;top:329px;" width="11.3" height="8" viewBox="0 0 11.3 8"><rect width="11.3" height="7.8" fill="#1E88E5"/><rect x="0.8" y="5.8" width="9.7" height="1.2" fill="#0D4F9E"/><path d="M1.5 6.4h1.5M4 6.4h1.5M6.5 6.4h1.5" stroke="#BFE0FF" stroke-width="0.8"/></svg>
<svg style="left:53.9px;top:350.7px;" width="12" height="17" viewBox="0 0 12 17"><path d="M0 0H10.3V15H0Z" fill="#F3CB5E"/><path d="M0 0.2L4 2.3V16.8L0 15Z" fill="#FBDF8C"/></svg>
<svg style="left:59px;top:352.8px;" width="11.4" height="15" viewBox="0 0 11.4 15"><path d="M0.4 0.4H7.8L11 3.6V14.6H0.4Z" fill="#FDFDFD" stroke="#6E7A8A" stroke-width="0.8"/><path d="M2.3 4h3.2M2.3 6.5h6.8M2.3 8.8h6.8M2.3 11.2h6.8" stroke="#3F86D8" stroke-width="1"/><path d="M5 11.2h4" stroke="#2E6A3A" stroke-width="1"/></svg>
<svg style="left:53.9px;top:380.7px;" width="12" height="17" viewBox="0 0 12 17"><path d="M0 0H10.3V15H0Z" fill="#F3CB5E"/><path d="M0 0.2L4 2.3V16.8L0 15Z" fill="#FBDF8C"/></svg>
<svg style="left:59.5px;top:387px;" width="11" height="10" viewBox="0 0 11 10"><path d="M3 0H8V4.2H11L5.5 9.8L0 4.2H3Z" fill="#2B8CE6"/></svg>
<svg style="left:53.9px;top:410.7px;" width="12" height="17" viewBox="0 0 12 17"><path d="M0 0H10.3V15H0Z" fill="#F3CB5E"/><path d="M0 0.2L4 2.3V16.8L0 15Z" fill="#FBDF8C"/></svg>
<svg style="left:59.5px;top:412.5px;" width="11" height="16" viewBox="0 0 11 16"><path d="M4.6 0.3Q5.5 3.5 9 5.5Q11.5 7.5 9.3 11.5Q10 8 6.3 6.2V12.5A3.1 2.8 0 1 1 4.6 10Z" fill="#1E9BF0"/></svg>
<svg style="left:53.9px;top:440px;" width="17" height="19" viewBox="0 0 17 19"><path d="M1.5 3.2L10.5 0.8L13.5 2V17L4 18.7L1.5 17.5Z" fill="#9A9A9A"/><path d="M4 4.6L13.5 2V17L4 18.7Z" fill="#C9C9C9"/><path d="M1.5 3.2L4 4.6V18.7L1.5 17.5Z" fill="#6F6F6F"/><rect x="6" y="1.2" width="6.6" height="5.4" fill="#3A4A5A"/><rect x="7" y="2" width="2.4" height="2" fill="#7FC241"/><rect x="9.6" y="2.6" width="2.2" height="2.6" fill="#E0A020"/><path d="M11 1.2Q16 0.8 16.3 5.5Q16 8.5 12.8 8.5Q15.2 6.5 14.4 4.2Q13.6 2.3 11 2.6Z" fill="#1E9BF0"/><rect x="2" y="5.5" width="1.2" height="2.4" fill="#8CD05A"/></svg>
<svg style="left:53.9px;top:470.7px;" width="12" height="17" viewBox="0 0 12 17"><path d="M0 0H10.3V15H0Z" fill="#F3CB5E"/><path d="M0 0.2L4 2.3V16.8L0 15Z" fill="#FBDF8C"/></svg>
<svg style="left:59px;top:474px;" width="11.4" height="12.6" viewBox="0 0 11.4 12.6"><rect width="11.4" height="12.6" fill="#2B2B2B"/><rect x="2.6" y="1" width="6.2" height="5" fill="#D8C030"/><rect x="2.6" y="6.6" width="6.2" height="5" fill="#3E7BD8"/><rect x="3.4" y="3" width="4.4" height="3" fill="#4A9A3A"/><rect x="3.4" y="8.6" width="4.4" height="3" fill="#D88A2A"/><path d="M1.2 1.2v1.4M1.2 4v1.4M1.2 6.8v1.4M1.2 9.6v1.4M10.2 1.2v1.4M10.2 4v1.4M10.2 6.8v1.4M10.2 9.6v1.4" stroke="#E8E8E8" stroke-width="1.1"/></svg>
<svg style="left:51.3px;top:507.7px;" width="19.0" height="10.0" viewBox="0 0 19 10"><path d="M0 4.5L4.5 0.6L19 2.8L14 7Z" fill="#ECECEC"/><path d="M0 4.5L14 7V10L0 7.5Z" fill="#6B6B6B"/><path d="M14 7L19 2.8V5.6L14 10Z" fill="#A9A9A9"/><path d="M1.3 5.6L4.2 6.1V7.2L1.3 6.7Z" fill="#6FD66F"/></svg>
<svg style="left:50.7px;top:503.6px;" width="9" height="8" viewBox="0 0 9 8"><path d="M0 1L3.8 0.4V3.6H0ZM4.5 0.3L8.6 -0.3V3.6H4.5ZM0 4.3H3.8V7.5L0 7ZM4.5 4.3H8.6V8.2L4.5 7.6Z" fill="#00ADEF"/></svg>
<svg style="left:51.5px;top:538.4px;" width="19.6" height="10.3" viewBox="0 0 19 10"><path d="M0 4.5L4.5 0.6L19 2.8L14 7Z" fill="#ECECEC"/><path d="M0 4.5L14 7V10L0 7.5Z" fill="#6B6B6B"/><path d="M14 7L19 2.8V5.6L14 10Z" fill="#A9A9A9"/><path d="M1.3 5.6L4.2 6.1V7.2L1.3 6.7Z" fill="#6FD66F"/></svg>
<div style="left:1030px;top:279px;width:4px;height:649px;background:linear-gradient(to right,rgba(0,0,0,.50),rgba(0,0,0,.36) 40%,rgba(0,0,0,.12) 75%,rgba(0,0,0,0));"></div>
<div style="left:504px;top:275px;width:526px;height:663px;background:#F2F2F2;border:1px solid #A0A0A0;box-sizing:border-box;"></div>
<div style="left:508px;top:486px;width:519px;height:28px;background:#D8D8D8;"></div>
<span class="t" style="left:547.50px;top:285.50px;font-size:15px;color:#141414;letter-spacing:0.040px;font-weight:bold;">Öffnen</span>
<span class="t" style="left:547.50px;top:313.50px;font-size:15px;color:#141414;letter-spacing:-0.214px;">In neuem Fenster öffnen</span>
<span class="t" style="left:547.50px;top:341.50px;font-size:15px;color:#141414;letter-spacing:-0.057px;">An Schnellzugriff anheften</span>
<span class="t" style="left:547.50px;top:490.50px;font-size:15px;color:#141414;letter-spacing:-0.129px;">Freigeben für</span>
<span class="t" style="left:547.50px;top:583.50px;font-size:15px;color:#141414;letter-spacing:-0.011px;">In Bibliothek aufnehmen</span>
<span class="t" style="left:547.50px;top:611.50px;font-size:15px;color:#141414;letter-spacing:-0.040px;">An &quot;Start&quot; anheften</span>
<span class="t" style="left:547.50px;top:648.50px;font-size:15px;color:#141414;letter-spacing:-0.319px;">Shreddern</span>
<span class="t" style="left:547.50px;top:676.50px;font-size:15px;color:#141414;letter-spacing:-0.011px;">Shredder-Optionen</span>
<span class="t" style="left:547.50px;top:713.50px;font-size:15px;color:#141414;letter-spacing:-0.272px;transform:scaleX(0.9656);transform-origin:0 0;">Senden an</span>
<span class="t" style="left:547.50px;top:750.50px;font-size:15px;color:#141414;letter-spacing:-0.436px;">Ausschneiden</span>
<span class="t" style="left:547.50px;top:778.50px;font-size:15px;color:#141414;letter-spacing:-0.096px;">Kopieren</span>
<span class="t" style="left:547.50px;top:815.50px;font-size:15px;color:#141414;letter-spacing:-0.131px;">Verknüpfung erstellen</span>
<span class="t" style="left:547.50px;top:843.50px;font-size:15px;color:#141414;letter-spacing:-0.283px;transform:scaleX(0.9564);transform-origin:0 0;">Löschen</span>
<span class="t" style="left:547.50px;top:871.50px;font-size:15px;color:#141414;letter-spacing:-0.308px;">Umbenennen</span>
<span class="t" style="left:547.50px;top:908.50px;font-size:15px;color:#141414;letter-spacing:-0.325px;">Eigenschaften</span>
<span class="t" style="left:547.00px;top:369.50px;font-size:15px;color:#141414;letter-spacing:-0.050px;">Zur</span>
<span class="t" style="left:574.20px;top:369.50px;font-size:15px;color:#141414;letter-spacing:-0.438px;transform:scaleX(0.9364);transform-origin:0 0;">VLC</span>
<span class="t" style="left:606.10px;top:369.50px;font-size:15px;color:#141414;letter-spacing:-0.307px;transform:scaleX(0.8937);transform-origin:0 0;">media</span>
<span class="t" style="left:647.60px;top:369.50px;font-size:15px;color:#141414;letter-spacing:-0.115px;">player</span>
<span class="t" style="left:693.30px;top:369.50px;font-size:15px;color:#141414;letter-spacing:-0.196px;">Wiedergabeliste</span>
<span class="t" style="left:805.10px;top:369.50px;font-size:15px;color:#141414;letter-spacing:-0.103px;">hinzufügen</span>
<span class="t" style="left:547.70px;top:397.50px;font-size:15px;color:#141414;letter-spacing:-0.300px;transform:scaleX(0.9603);transform-origin:0 0;">Browse</span>
<span class="t" style="left:599.48px;top:397.50px;font-size:15px;color:#141414;letter-spacing:-0.192px;">with</span>
<span class="t" style="left:632.00px;top:397.50px;font-size:15px;color:#141414;letter-spacing:-0.257px;transform:scaleX(0.9134);transform-origin:0 0;">Paint</span>
<span class="t" style="left:667.80px;top:397.50px;font-size:15px;color:#141414;letter-spacing:-0.350px;transform:scaleX(0.9125);transform-origin:0 0;">Shop</span>
<span class="t" style="left:704.80px;top:397.50px;font-size:15px;color:#141414;letter-spacing:-0.350px;transform:scaleX(0.9326);transform-origin:0 0;">Pro</span>
<span class="t" style="left:731.70px;top:397.50px;font-size:15px;color:#141414;">9</span>
<span class="t" style="left:547.70px;top:425.50px;font-size:15px;color:#141414;letter-spacing:0.488px;">Mit</span>
<span class="t" style="left:574.20px;top:425.50px;font-size:15px;color:#141414;letter-spacing:-0.438px;transform:scaleX(0.9364);transform-origin:0 0;">VLC</span>
<span class="t" style="left:606.10px;top:425.50px;font-size:15px;color:#141414;letter-spacing:-0.307px;transform:scaleX(0.8937);transform-origin:0 0;">media</span>
<span class="t" style="left:647.60px;top:425.50px;font-size:15px;color:#141414;letter-spacing:-0.115px;">player</span>
<span class="t" style="left:692.78px;top:425.50px;font-size:15px;color:#141414;letter-spacing:-0.005px;">wiedergeben</span>
<span class="t" style="left:547.60px;top:453.50px;font-size:15px;color:#141414;letter-spacing:-0.285px;transform:scaleX(0.9236);transform-origin:0 0;">Führen</span>
<span class="t" style="left:595.90px;top:453.50px;font-size:15px;color:#141414;letter-spacing:-0.325px;transform:scaleX(0.8704);transform-origin:0 0;">Sie</span>
<span class="t" style="left:619.30px;top:453.50px;font-size:15px;color:#141414;letter-spacing:-0.162px;">die</span>
<span class="t" style="left:643.80px;top:453.50px;font-size:15px;color:#141414;letter-spacing:-0.060px;">Überprüfung</span>
<span class="t" style="left:733.00px;top:453.50px;font-size:15px;color:#141414;letter-spacing:0.437px;">mit</span>
<span class="t" style="left:757.70px;top:453.50px;font-size:15px;color:#141414;letter-spacing:-0.071px;">Windows</span>
<span class="t" style="left:823.90px;top:453.50px;font-size:15px;color:#141414;letter-spacing:-0.318px;">Defender</span>
<span class="t" style="left:889.60px;top:453.50px;font-size:15px;color:#141414;letter-spacing:-0.214px;transform:scaleX(0.9212);transform-origin:0 0;">durch...</span>
<span class="t" style="left:546.90px;top:518.50px;font-size:15px;color:#141414;letter-spacing:-0.162px;">Vorgängerversionen</span>
<span class="t" style="left:684.28px;top:518.50px;font-size:15px;color:#141414;letter-spacing:-0.138px;">wiederherstellen</span>
<span class="t" style="left:547.50px;top:555.50px;font-size:15px;color:#141414;letter-spacing:-0.043px;">Auf Viren prüfen</span>
<span class="t" style="left:659.00px;top:555.50px;font-size:15px;color:#141414;letter-spacing:-0.266px;transform:scaleX(0.9282);transform-origin:0 0;">(G DATA INTERNET SECURITY)</span>
<div style="left:517px;top:481px;width:500px;height:1px;background:#919191;"></div>
<div style="left:517px;top:546px;width:500px;height:1px;background:#919191;"></div>
<div style="left:517px;top:639px;width:500px;height:1px;background:#919191;"></div>
<div style="left:517px;top:704px;width:500px;height:1px;background:#919191;"></div>
<div style="left:517px;top:741px;width:500px;height:1px;background:#919191;"></div>
<div style="left:517px;top:806px;width:500px;height:1px;background:#919191;"></div>
<div style="left:517px;top:899px;width:500px;height:1px;background:#919191;"></div>
<svg style="left:1007px;top:491px;" width="11" height="18" viewBox="0 0 11 18"><path d="M1.5 1.5 L9.5 9 L1.5 16.5" fill="none" stroke="#1A1A2A" stroke-width="1.3"/></svg>
<svg style="left:1007px;top:584px;" width="11" height="18" viewBox="0 0 11 18"><path d="M1.5 1.5 L9.5 9 L1.5 16.5" fill="none" stroke="#1A1A2A" stroke-width="1.3"/></svg>
<svg style="left:1007px;top:714px;" width="11" height="18" viewBox="0 0 11 18"><path d="M1.5 1.5 L9.5 9 L1.5 16.5" fill="none" stroke="#1A1A2A" stroke-width="1.3"/></svg>
<div style="left:507px;top:486px;width:3px;height:40px;background:linear-gradient(to right,rgba(0,0,0,.5),rgba(0,0,0,.25) 50%,rgba(0,0,0,0));"></div>
<div style="left:234px;top:523px;width:276px;height:3px;background:linear-gradient(to bottom,rgba(0,0,0,.5),rgba(0,0,0,.25) 50%,rgba(0,0,0,0));"></div>
<div style="left:231px;top:483px;width:276px;height:40px;background:#F2F2F2;border:1px solid #A0A0A0;box-sizing:border-box;"></div>
<span class="t" style="left:274.50px;top:493.50px;font-size:15px;color:#141414;letter-spacing:-0.281px;">Erweiterte Freigabe...</span>
<svg style="left:210px;top:458px;" width="320" height="92" viewBox="0 0 320 92"><rect x="8.5" y="7.5" width="299.8" height="75.7" rx="10" ry="10" fill="none" stroke="#FF0000" stroke-width="4.3"/></svg>
<svg style="left:519px;top:557px;" width="16" height="16" viewBox="0 0 16 16"><rect width="16" height="16" fill="#CC0812"/><path d="M2.1 2.5Q8 0.6 13.9 2.5Q13.6 10.5 8.4 14.9Q2.6 10.5 2.1 2.5Z" fill="#fff"/><path d="M5.4 4H12.5V5H7.9Q8 7.6 10.1 8.3L9.6 9.9Q5.6 9.6 5.4 4Z" fill="#CC0812"/></svg>
<svg style="left:519px;top:650px;" width="16" height="16" viewBox="0 0 16 16"><rect width="16" height="16" fill="#CC0812"/><path d="M4.8 1.9H9.2L11.5 4.2V8.4H4.8Z" fill="#fff"/><path d="M9 2.2V4.6H11.3Z" fill="#C9A0A8"/><rect x="2.1" y="8" width="11.7" height="4.2" fill="#F4E9EA"/><path d="M3.6 9.6h8.8" stroke="#C48A92" stroke-width="1.2" stroke-dasharray="1.2 1"/><path d="M5.4 12.6h5.4M6.2 13.8h3.8" stroke="#fff" stroke-width="1" stroke-dasharray="1 1"/></svg>
<svg style="left:246px;top:493px;" width="19" height="20" viewBox="0 0 19 20"><path d="M1 0.5H14.5V19H1Z" fill="#F6D875"/><path d="M1 0.5L5.5 3V19.5L1 17.5Z" fill="#FBE49A"/><circle cx="8.6" cy="9.6" r="2.5" fill="#5A3A22"/><path d="M4.5 18.5Q4.5 12.8 8.6 12.6Q12.6 12.8 12.6 18.5Z" fill="#3A8A4A"/><circle cx="13.6" cy="10.4" r="2.4" fill="#4A3020"/><path d="M9.8 18.8Q9.8 13.4 13.8 13.2Q18 13.4 18 18.8Z" fill="#2F7FD0"/></svg>
</body></html>
